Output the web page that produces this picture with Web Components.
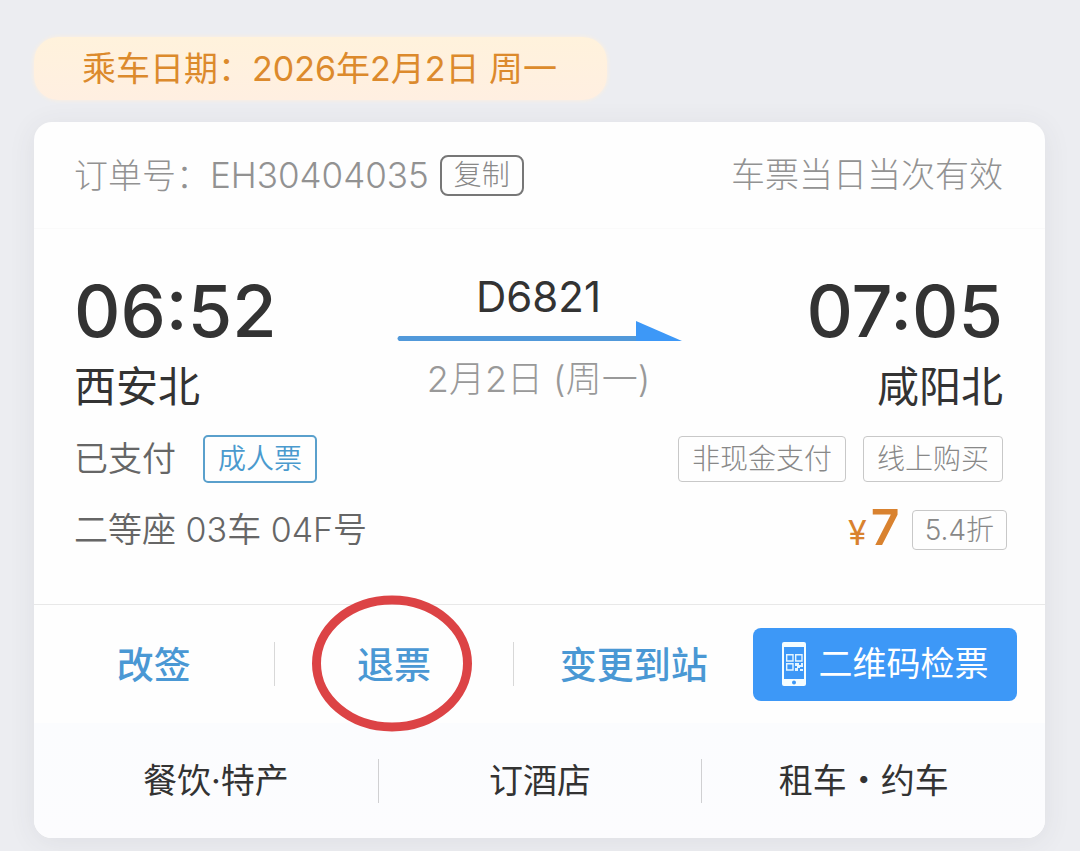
<!DOCTYPE html>
<html lang="zh-CN">
<head>
<meta charset="utf-8">
<meta name="viewport" content="width=device-width, initial-scale=1">
<title>车票订单</title>
<style>
  body {
    margin: 0;
    min-height: 100vh;
    background: #ecedf1;
    color: #333;
    font-family: Inter, "Noto Sans CJK SC", sans-serif;
    font-size: 34px;
    font-weight: 300;
    line-height: 40px;
  }
</style>
</head>
<body>
<ticket-page></ticket-page>
<script>
const define = (name, html) => {
  const template = document.createElement('template');
  template.innerHTML = `<style>*{box-sizing:border-box}</style>${html}`;
  customElements.define(name, class extends HTMLElement {
    constructor() {
      super();
      this.attachShadow({ mode: 'open' }).append(template.content.cloneNode(true));
    }
  });
};

define('date-pill', `
<style>
  :host {
    display: block; width: fit-content; padding: 12px 50px 11px 48px;
    border-radius: 24px; color: #dc8a2c; font-weight: 400;
    background: linear-gradient(#fff2dc, #ffefe1);
    box-shadow: 0 0 4px #fff0dc;
  }
</style>
<slot></slot>`);

define('ticket-tag', `
<style>
  :host {
    display: block; padding: 2px 13px; border: 1px solid #c8c8c8; border-radius: 4px;
    color: #888; font-size: 28px; line-height: 40px; white-space: nowrap;
  }
  :host([kind="adult"]) {
    padding: 2px 13px; border: 2px solid #5aa0cc; border-radius: 5px; color: #4a9ace; font-weight: 350;
  }
  :host([kind="discount"]) { padding: 0 12px; line-height: 38px; }
</style>
<slot></slot>`);

define('order-header', `
<style>
  :host {
    display: flex; align-items: center; justify-content: space-between;
    height: 107px; padding: 0 42px 0 40px; color: #929292; border-bottom: 1px solid #fafafa;
  }
  .order { display: flex; align-items: center; gap: 11px; }
  button {
    padding: 0 12px; border: 2px solid #777; border-radius: 8px; background: none;
    color: #888; font: inherit; font-size: 28px; line-height: 37px;
  }
</style>
<div class="order"><span><slot name="number"></slot></span><button type="button">复制</button></div>
<slot name="validity"></slot>`);

define('trip-stop', `
<style>
  :host { display: block; }
  :host([align="end"]) { text-align: right; }
  .time { font-size: 72px; font-weight: 450; line-height: 90px; }
  .station { font-size: 42px; font-weight: 400; line-height: 62px; }
</style>
<div class="time"><slot name="time"></slot></div>
<div class="station"><slot name="station"></slot></div>`);

define('trip-route', `
<style>
  :host { display: grid; grid-template-columns: 1fr 286px 1fr; padding: 37px 42px 0 40px; }
  .middle { text-align: center; padding-top: 7px; }
  .train { font-size: 42px; font-weight: 400; line-height: 48px; }
  svg { display: block; width: 286px; height: 24px; }
  .date { font-size: 36px; line-height: 48px; margin-top: 10px; color: #999; }
</style>
<slot name="from"></slot>
<div class="middle">
  <div class="train"><slot name="train"></slot></div>
  <svg viewBox="0 0 286 24" aria-hidden="true">
    <path d="M3 15H242V20H3Q0 17.5 3 15Z" fill="#5199da"/>
    <path d="M240 0L286 20H240Z" fill="#3d98f7"/>
  </svg>
  <div class="date"><slot name="date"></slot></div>
</div>
<slot name="to"></slot>`);

define('ticket-details', `
<style>
  :host { display: block; padding: 17px 42px 50px 40px; color: #666; }
  .row { display: flex; align-items: center; justify-content: space-between; height: 48px; }
  .row + .row { margin-top: 23px; }
  .row > span, .status > span { font-weight: 350; }
  .group { display: flex; align-items: center; }
  .status { gap: 27px; }
  .tags { gap: 17px; }
  .price { gap: 12px; margin-right: -4px; }
  .amount { color: #d9822f; font-size: 50px; font-weight: 600; }
  small { font-size: 34px; font-weight: 400; margin-right: 4px; }
</style>
<div class="row">
  <div class="group status"><span>已支付</span><ticket-tag kind="adult">成人票</ticket-tag></div>
  <div class="group tags"><ticket-tag>非现金支付</ticket-tag><ticket-tag>线上购买</ticket-tag></div>
</div>
<div class="row">
  <span>二等座 03车 04F号</span>
  <div class="group price"><span class="amount"><small>¥</small>7</span><ticket-tag kind="discount">5.4折</ticket-tag></div>
</div>`);

define('action-bar', `
<style>
  :host {
    display: grid; grid-template-columns: 1fr 1fr 1fr 264px; align-items: center;
    height: 119px; padding-right: 28px; border-top: 1px solid #e8e8e8;
  }
  button { border: 0; background: none; font: inherit; padding: 0; white-space: nowrap; }
  .action { position: relative; height: 44px; padding-top: 3px; color: #4a98d4; font-size: 37px; font-weight: 500; line-height: 40px; }
  .action + .action { border-left: 1px solid #d8d8d8; }
  .ring {
    position: absolute; left: 49%; top: 50%; width: 160px; height: 137px;
    transform: translate(-50%, -50%); pointer-events: none; overflow: visible;
  }
  .check {
    display: flex; align-items: center; justify-content: center; gap: 13px;
    height: 73px; border-radius: 8px; background: #3d98f7; color: #fff; font-weight: 400;
  }
  .check svg { width: 24px; height: 44px; }
</style>
<button class="action" type="button">改签</button>
<button class="action" type="button">退票
  <svg class="ring" viewBox="0 0 160 137" aria-hidden="true"><ellipse cx="80" cy="68" rx="75.5" ry="63.5" fill="none" stroke="#dc4345" stroke-width="9"/></svg>
</button>
<button class="action" type="button">变更到站</button>
<button class="check" type="button">
  <svg viewBox="0 0 24 44" aria-hidden="true">
    <path fill="#f4fdff" fill-rule="evenodd" d="M2 0H22Q24 0 24 2V42Q24 44 22 44H2Q0 44 0 42V2Q0 0 2 0ZM2 5V37H22V5ZM12 38.5A2 2 0 1 0 12 42.5A2 2 0 1 0 12 38.5Z"/>
    <path fill="none" stroke="#e4f5ff" stroke-width="1.4" d="M4.7 12.7H11V19H4.7ZM13.7 12.7H20V19H13.7ZM4.7 21.7H11V28H4.7Z"/>
    <path fill="#e4f5ff" d="M13 21H17V23H19V21H21V25H18V26H16V29H13V26H15V24H13ZM18 27H21V29H18Z"/>
  </svg>
  <span>二维码检票</span>
</button>`);

define('service-links', `
<style>
  :host {
    display: grid; grid-template-columns: repeat(3, 1fr); align-items: center;
    height: 115px; padding: 0 20px; background: linear-gradient(#fbfcfe, #fcfcfe);
  }
  a { color: #333; text-decoration: none; text-align: center; font-weight: 400; line-height: 44px; }
  a + a { border-left: 1px solid #d0d0d2; }
</style>
<a href="#food">餐饮·特产</a>
<a href="#hotel">订酒店</a>
<a href="#car">租车・约车</a>`);

define('order-card', `
<style>
  :host {
    display: block; margin-top: 22px; overflow: hidden; border-radius: 18px; background: #fefefe;
    box-shadow: 0 4px 28px rgba(60, 65, 75, .08);
  }
</style>
<slot></slot>`);

define('ticket-page', `
<style>
  :host { display: block; padding: 37px 35px 13px 34px; }
  .code { font-size: 35px; }
</style>
<date-pill>乘车日期：2026年2月2日 周一</date-pill>
<order-card>
  <order-header>
    <span slot="number">订单号：<span class="code">EH30404035</span></span>
    <span slot="validity">车票当日当次有效</span>
  </order-header>
  <trip-route>
    <trip-stop slot="from"><time slot="time">06:52</time><span slot="station">西安北</span></trip-stop>
    <span slot="train">D6821</span>
    <span slot="date">2月2日 (周一)</span>
    <trip-stop slot="to" align="end"><time slot="time">07:05</time><span slot="station">咸阳北</span></trip-stop>
  </trip-route>
  <ticket-details></ticket-details>
  <action-bar></action-bar>
  <service-links></service-links>
</order-card>`);
</script>
</body>
</html>
